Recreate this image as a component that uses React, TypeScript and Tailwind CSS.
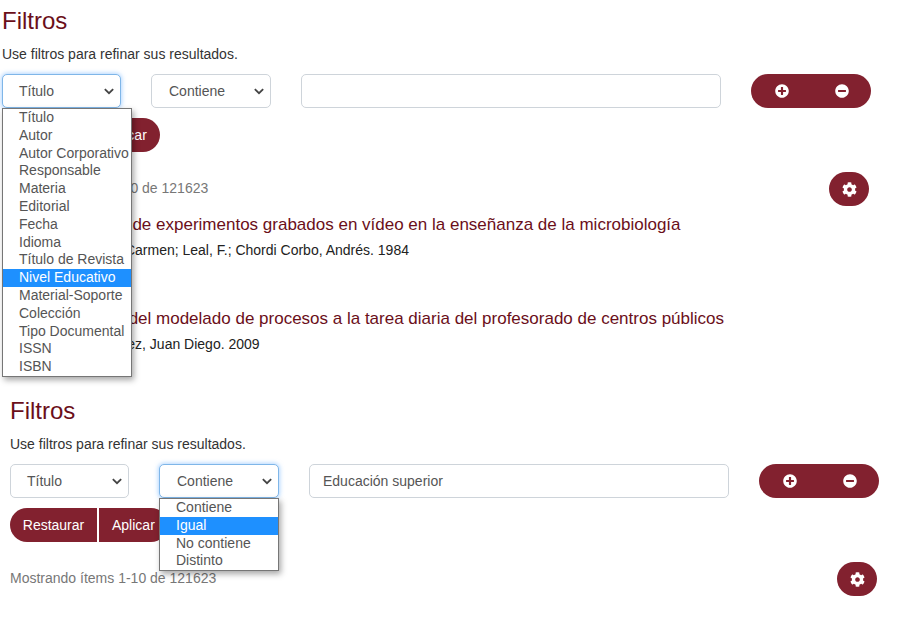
import React from "react";
import { FaPlusCircle, FaMinusCircle, FaCog } from "react-icons/fa";

const maroon = "bg-[#82212f]";

function Chevron() {
  return (
    <svg viewBox="0 0 12 8" className="w-[10px] h-[7px]" fill="none" stroke="#444" strokeWidth="2.2">
      <path d="M1 1.2 L6 6 L11 1.2" />
    </svg>
  );
}

function SelectBox({ label, focus, className }: { label: string; focus?: boolean; className: string }) {
  return (
    <div
      className={`${className} h-[34px] shrink-0 rounded-[5px] border flex items-center justify-between pr-[6px] text-[14px] text-[#555] bg-white ${
        focus ? "border-[#7fb6e8] shadow-[0_0_4px_1px_rgba(128,189,255,0.6)]" : "border-[#ced4da]"
      }`}
    >
      <span>{label}</span>
      <Chevron />
    </div>
  );
}

function Dropdown({ items, active, className }: { items: string[]; active: string; className: string }) {
  return (
    <div className={`absolute z-10 bg-white border border-[#767676] shadow-[2px_3px_6px_rgba(0,0,0,0.35)] text-[14px] text-[#555] ${className}`}>
      {items.map((t) => (
        <div
          key={t}
          className={`h-[17.8px] leading-[17px] pl-[16px] whitespace-nowrap ${t === active ? "bg-[#1e90ff] text-white" : ""}`}
        >
          {t}
        </div>
      ))}
    </div>
  );
}

function FilterBlock({ inputValue, first }: { inputValue?: string; first: boolean }) {
  return (
    <div className="relative">
      <h2 className="text-[24px] leading-[29px] text-[#6b0f1a] pt-[6px]">Filtros</h2>
      <p className="text-[14px] leading-[20px] text-[#333] mt-[9px]">Use filtros para refinar sus resultados.</p>
      <div className="flex mt-[10px] gap-[30px]">
        <SelectBox label="Título" className="w-[119px] pl-[16px]" focus={first} />
        <SelectBox label="Contiene" className="w-[120px] pl-[17px]" focus={!first} />
        <div className="w-[420px] h-[34px] rounded-[5px] border border-[#ced4da] flex items-center pl-[13px] text-[14px] text-[#555]">
          {inputValue}
        </div>
        <div className={`w-[120px] h-[34px] rounded-full ${maroon} flex items-center text-white`}>
          <div className="w-[61px] pl-[1px] flex justify-center"><FaPlusCircle size={14} /></div>
          <div className="w-[59px] flex justify-center"><FaMinusCircle size={14} /></div>
        </div>
      </div>
      <div className="flex mt-[10px] text-[14px] text-white gap-[2px]">
        <div className={`w-[87px] h-[34px] rounded-l-full ${maroon} flex items-center justify-center`}>Restaurar</div>
        <div className={`w-[69px] h-[34px] rounded-r-full ${maroon} flex items-center pl-[13px]`}>Aplicar</div>
      </div>
      <div className="flex items-start w-[867px] mt-[20px]">
        <p className="text-[14px] text-[#777] flex-1 pt-[6px] leading-[20px]">Mostrando ítems 1-10 de 121623</p>
        <div className={`w-[40px] h-[34px] rounded-full ${maroon} flex items-center justify-center text-white`}>
          <FaCog size={15} />
        </div>
      </div>
    </div>
  );
}

function Result({ title, author, mt }: { title: string; author: string; mt: string }) {
  return (
    <div className={mt}>
      <p className="text-[17px] leading-[24px] text-[#6b0f1a] whitespace-nowrap">{title}</p>
      <p className="text-[14px] leading-[20px] text-[#222] mt-[3px] whitespace-nowrap">{author}</p>
    </div>
  );
}

export default function App() {
  return (
    <div className="relative w-[908px] h-[641px] bg-white overflow-hidden font-['Liberation_Sans',Arial,sans-serif]">
      <div className="pl-[2px]">
        <FilterBlock first />
        <Result
          mt="mt-[7px]"
          title="Sobre la eficacia de experimentos grabados en vídeo en la enseñanza de la microbiología"
          author="Sánchez Gil, María Carmen; Leal, F.; Chordi Corbo, Andrés. 1984"
        />
        <Result
          mt="mt-[47px]"
          title="La transferencia del modelado de procesos a la tarea diaria del profesorado de centros públicos"
          author="Rodríguez Domínguez, Juan Diego. 2009"
        />
      </div>
      <div className="pl-[10px] mt-[36px]">
        <FilterBlock first={false} inputValue="Educación superior" />
      </div>
      <Dropdown
        className="left-[2px] top-[108px] w-[130px]"
        active="Nivel Educativo"
        items={["Título","Autor","Autor Corporativo","Responsable","Materia","Editorial","Fecha","Idioma","Título de Revista","Nivel Educativo","Material-Soporte","Colección","Tipo Documental","ISSN","ISBN"]}
      />
      <Dropdown
        className="left-[159px] top-[498px] w-[120px]"
        active="Igual"
        items={["Contiene","Igual","No contiene","Distinto"]}
      />
    </div>
  );
}
